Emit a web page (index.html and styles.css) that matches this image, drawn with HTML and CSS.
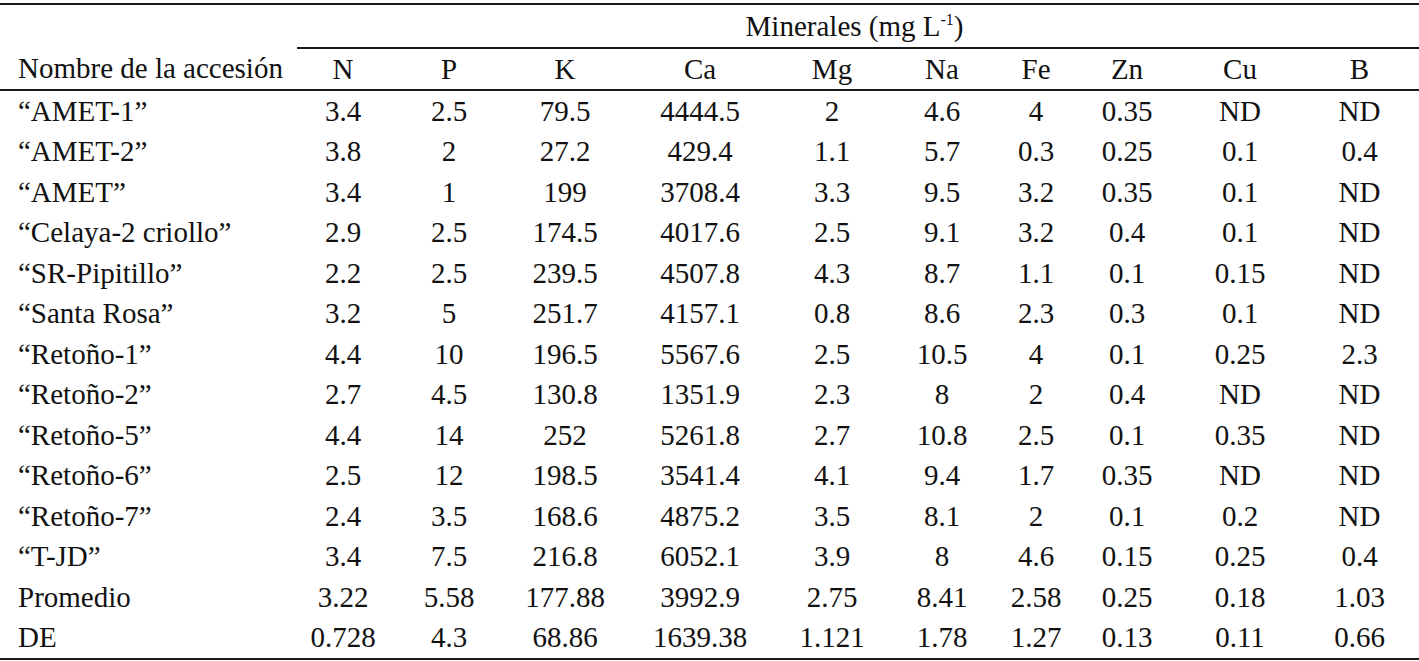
FILE: index.html
```html
<!DOCTYPE html>
<html lang="es">
<head>
<meta charset="utf-8">
<title>Minerales</title>
<link rel="stylesheet" href="styles.css">
</head>
<body>
<table class="data">
  <colgroup>
    <col class="c-name"><col class="c-n"><col class="c-p"><col class="c-k"><col class="c-ca"><col class="c-mg"><col class="c-na"><col class="c-fe"><col class="c-zn"><col class="c-cu"><col class="c-b">
  </colgroup>
  <thead>
    <tr class="group">
      <th></th>
      <th colspan="10" class="group-title">Minerales (mg L<sup>-1</sup>)</th>
    </tr>
    <tr class="heads">
      <th class="name">Nombre de la accesión</th>
      <th>N</th><th>P</th><th>K</th><th>Ca</th><th>Mg</th><th>Na</th><th>Fe</th><th>Zn</th><th>Cu</th><th>B</th>
    </tr>
  </thead>
  <tbody>
    <tr><td class="name">“AMET-1”</td><td>3.4</td><td>2.5</td><td>79.5</td><td>4444.5</td><td>2</td><td>4.6</td><td>4</td><td>0.35</td><td>ND</td><td>ND</td></tr>
    <tr><td class="name">“AMET-2”</td><td>3.8</td><td>2</td><td>27.2</td><td>429.4</td><td>1.1</td><td>5.7</td><td>0.3</td><td>0.25</td><td>0.1</td><td>0.4</td></tr>
    <tr><td class="name">“AMET”</td><td>3.4</td><td>1</td><td>199</td><td>3708.4</td><td>3.3</td><td>9.5</td><td>3.2</td><td>0.35</td><td>0.1</td><td>ND</td></tr>
    <tr><td class="name">“Celaya-2 criollo”</td><td>2.9</td><td>2.5</td><td>174.5</td><td>4017.6</td><td>2.5</td><td>9.1</td><td>3.2</td><td>0.4</td><td>0.1</td><td>ND</td></tr>
    <tr><td class="name">“SR-Pipitillo”</td><td>2.2</td><td>2.5</td><td>239.5</td><td>4507.8</td><td>4.3</td><td>8.7</td><td>1.1</td><td>0.1</td><td>0.15</td><td>ND</td></tr>
    <tr><td class="name">“Santa Rosa”</td><td>3.2</td><td>5</td><td>251.7</td><td>4157.1</td><td>0.8</td><td>8.6</td><td>2.3</td><td>0.3</td><td>0.1</td><td>ND</td></tr>
    <tr><td class="name">“Retoño-1”</td><td>4.4</td><td>10</td><td>196.5</td><td>5567.6</td><td>2.5</td><td>10.5</td><td>4</td><td>0.1</td><td>0.25</td><td>2.3</td></tr>
    <tr><td class="name">“Retoño-2”</td><td>2.7</td><td>4.5</td><td>130.8</td><td>1351.9</td><td>2.3</td><td>8</td><td>2</td><td>0.4</td><td>ND</td><td>ND</td></tr>
    <tr><td class="name">“Retoño-5”</td><td>4.4</td><td>14</td><td>252</td><td>5261.8</td><td>2.7</td><td>10.8</td><td>2.5</td><td>0.1</td><td>0.35</td><td>ND</td></tr>
    <tr><td class="name">“Retoño-6”</td><td>2.5</td><td>12</td><td>198.5</td><td>3541.4</td><td>4.1</td><td>9.4</td><td>1.7</td><td>0.35</td><td>ND</td><td>ND</td></tr>
    <tr><td class="name">“Retoño-7”</td><td>2.4</td><td>3.5</td><td>168.6</td><td>4875.2</td><td>3.5</td><td>8.1</td><td>2</td><td>0.1</td><td>0.2</td><td>ND</td></tr>
    <tr><td class="name">“T-JD”</td><td>3.4</td><td>7.5</td><td>216.8</td><td>6052.1</td><td>3.9</td><td>8</td><td>4.6</td><td>0.15</td><td>0.25</td><td>0.4</td></tr>
    <tr><td class="name">Promedio</td><td>3.22</td><td>5.58</td><td>177.88</td><td>3992.9</td><td>2.75</td><td>8.41</td><td>2.58</td><td>0.25</td><td>0.18</td><td>1.03</td></tr>
    <tr class="last"><td class="name">DE</td><td>0.728</td><td>4.3</td><td>68.86</td><td>1639.38</td><td>1.121</td><td>1.78</td><td>1.27</td><td>0.13</td><td>0.11</td><td>0.66</td></tr>
  </tbody>
</table>
</body>
</html>
```
FILE: styles.css
```css
html, body {
  margin: 0;
  padding: 0;
  background: #ffffff;
}

body {
  padding-top: 3px;
  font-family: "Liberation Serif", Tinos, "Noto Serif", FreeSerif, "Nimbus Roman", "DejaVu Serif", Times, serif;
}

.data {
  width: 1419px;
  table-layout: fixed;
  border-collapse: collapse;
  font-family: "Liberation Serif", Tinos, "Noto Serif", FreeSerif, "Nimbus Roman", "DejaVu Serif", Times, serif;
  font-size: 29px;
  color: #111111;
  border-top: 2px solid #1a1a1a;
  border-bottom: 2px solid #1a1a1a;
}

.c-name { width: 297px; }
.c-n { width: 99px; }
.c-p { width: 111px; }
.c-k { width: 125px; }
.c-ca { width: 134px; }
.c-mg { width: 121px; }
.c-na { width: 102px; }
.c-fe { width: 92px; }
.c-zn { width: 103px; }
.c-cu { width: 116px; }
.c-b { width: 119px; }

.data th,
.data td {
  padding: 0;
  font-family: inherit;
  font-weight: normal;
  text-align: center;
  white-space: nowrap;
  line-height: 1;
}

.group th {
  height: 42px;
}

.group-title {
  border-bottom: 2px solid #1a1a1a;
}

.group-title sup {
  font-size: 0.55em;
  vertical-align: 0.7em;
  line-height: 0;
}

.heads th {
  height: 40px;
  border-bottom: 2px solid #1a1a1a;
}

.data tbody td {
  height: 40.5px;
}

.data .name {
  text-align: left;
  padding-left: 18px;
}

.data th:nth-child(2), .data td:nth-child(2) { padding-right: 7px; }
.data th:nth-child(3), .data td:nth-child(3) { padding-right: 5px; }
.data th:nth-child(4), .data td:nth-child(4) { padding-right: 9px; }
.data th:nth-child(5), .data td:nth-child(5) { padding-left: 2px; }
.data th:nth-child(6), .data td:nth-child(6) { padding-left: 11px; }
.data th:nth-child(7), .data td:nth-child(7) { padding-left: 8px; }
.data th:nth-child(8), .data td:nth-child(8) { padding-left: 2px; }
.data th:nth-child(9), .data td:nth-child(9) { padding-right: 11px; }
.data th:nth-child(10), .data td:nth-child(10) { padding-right: 4px; }

.group .group-title { padding: 0; }
```
